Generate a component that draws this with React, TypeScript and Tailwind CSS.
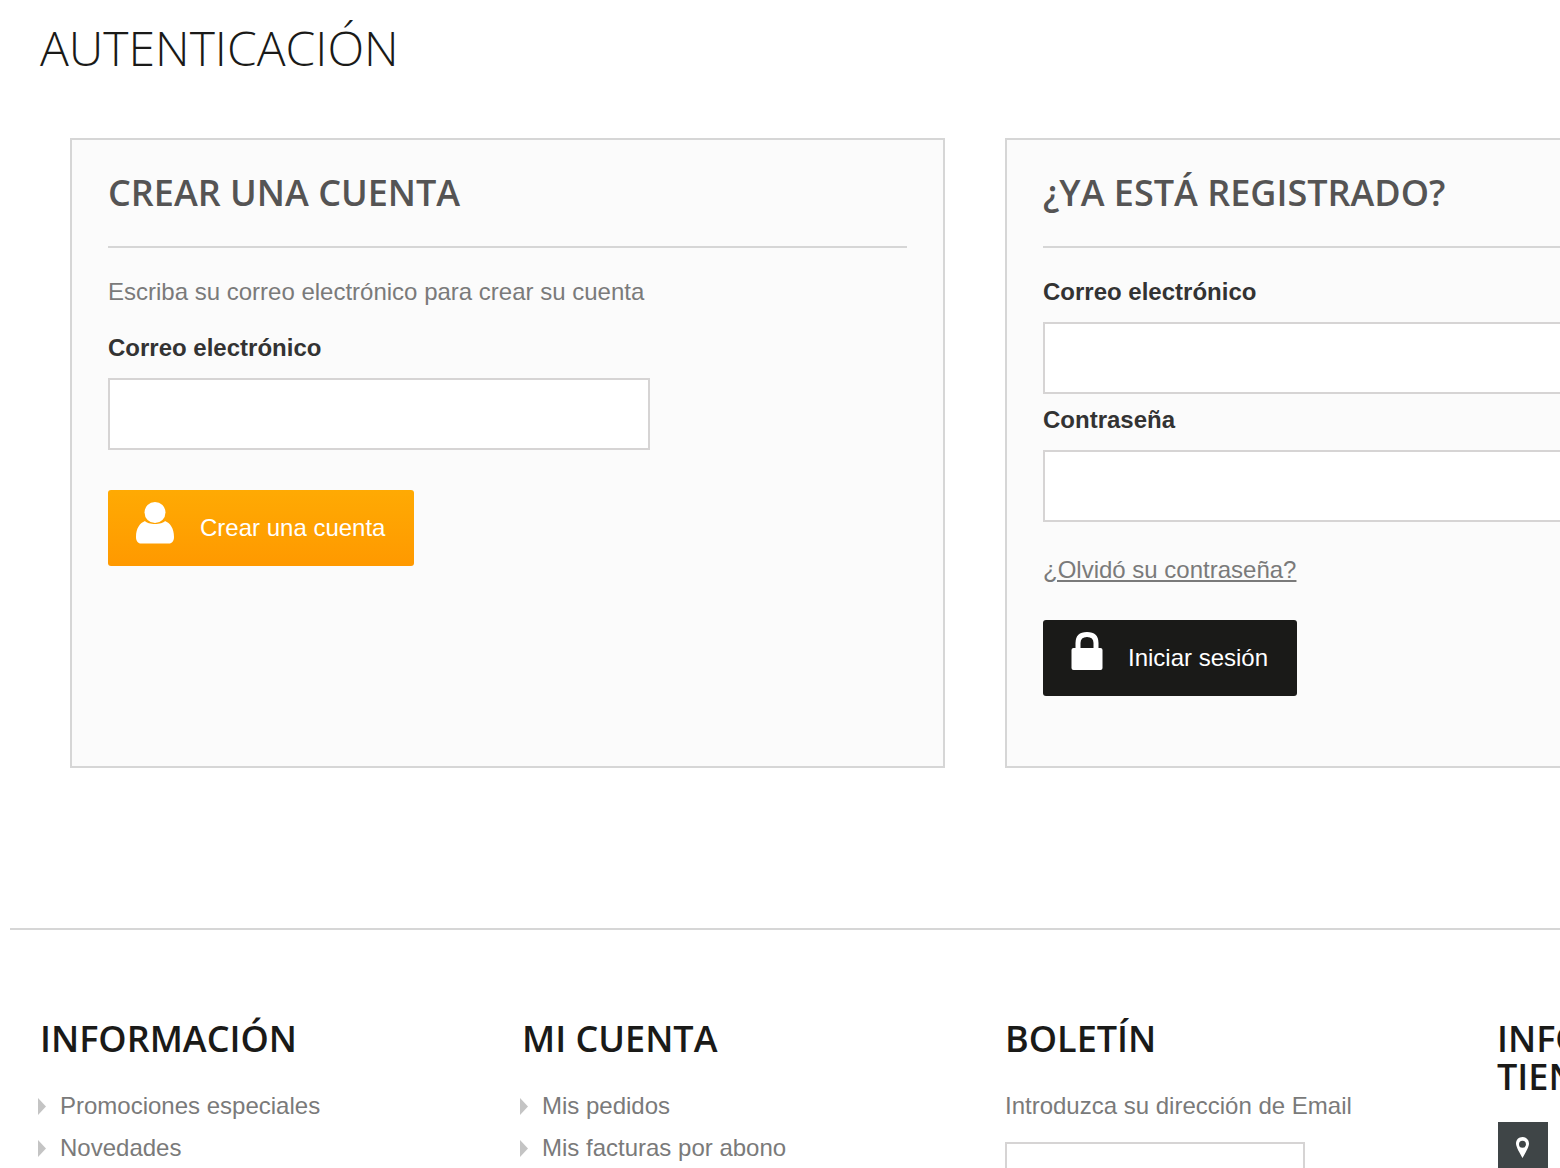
const sans = "font-['Liberation_Sans',Arial,sans-serif]";

function Arrow() {
  return (
    <svg width="8" height="17" viewBox="0 0 8 17" className="shrink-0">
      <path d="M0 0 L8 8.500 L0 17 Z" fill="#c4c4c4" />
    </svg>
  );
}

function PersonIcon() {
  return (
    <svg width="38" height="42" viewBox="0 0 38 42" className="mb-[10px] shrink-0">
      <circle cx="19" cy="10.500" r="10.500" fill="#fff" />
      <path d="M9 19 C12 23 26 23 29 19 C34 21 38 26 38 35 C38 39 36 41.500 33 41.500 L5 41.500 C2 41.500 0 39 0 35 C0 26 4 21 9 19 Z" fill="#fff" />
    </svg>
  );
}

function LockIcon() {
  return (
    <svg width="32" height="38" viewBox="0 0 32 38" className="mb-[14px] shrink-0">
      <path d="M7 17 V11 C7 5 10.500 2.500 16 2.500 C21.500 2.500 25 5 25 11 V17" fill="none" stroke="#fff" strokeWidth="5" />
      <rect x="0.500" y="16" width="31" height="22" rx="2" fill="#fff" />
    </svg>
  );
}

function PinIcon() {
  return (
    <svg width="13" height="21" viewBox="0 0 13 21">
      <path
        fillRule="evenodd"
        d="M6.500 0 C10.200 0 13 2.800 13 6.500 C13 10 9 16.500 6.500 21 C4 16.500 0 10 0 6.500 C0 2.800 2.800 0 6.500 0 Z M6.500 3.800 A3.500 3.500 0 1 0 6.500 10.800 A3.500 3.500 0 1 0 6.500 3.800 Z"
        fill="#fff"
      />
    </svg>
  );
}

function Panel({ title, children }: { title: string; children: React.ReactNode }) {
  return (
    <section className="h-[630px] w-[875px] shrink-0 border-2 border-[#d6d6d6] bg-[#fbfbfb] px-[36px]">
      <h3 className="h-[108px] border-b-2 border-[#d6d6d6] pt-[29px] font-['Open_Sans',sans-serif] text-[36px] leading-[48px] font-semibold text-[#555454]">
        {title}
      </h3>
      {children}
    </section>
  );
}

function Field({ label }: { label: string }) {
  return (
    <>
      <label className={`block pb-[4px] ${sans} text-[24px] leading-[52px] font-bold text-[#333]`}>{label}</label>
      <input className="block h-[72px] w-full border-2 border-[#d6d4d4] bg-white" />
    </>
  );
}

function FooterColumn({ title, items, className }: { title: string; items: string[]; className: string }) {
  return (
    <div className={`shrink-0 ${className}`}>
      <h4 className="font-['Open_Sans',sans-serif] text-[36px] leading-[40px] font-semibold text-[#1a1a18]">{title}</h4>
      <ul className="mt-[26px] -ml-[2px]">
        {items.map((item) => (
          <li key={item} className={`flex h-[42px] items-center gap-[14px] ${sans} text-[24px] text-[#7a7a7a]`}>
            <Arrow />
            {item}
          </li>
        ))}
      </ul>
    </div>
  );
}

export default function App() {
  return (
    <div className="h-[1168px] w-[1560px] overflow-hidden bg-white">
      <h1 className="pt-[15px] pl-[40px] font-['Open_Sans',sans-serif] text-[48px] leading-[65px] font-light text-[#1a1a18]">
        AUTENTICACIÓN
      </h1>

      {/* Account boxes */}
      <div className="mt-[58px] ml-[70px] flex w-[1810px] gap-[60px]">
        <Panel title="CREAR UNA CUENTA">
          <p className={`pt-[27px] ${sans} text-[24px] leading-[34px] text-[#7a7a7a]`}>
            Escriba su correo electrónico para crear su cuenta
          </p>
          <div className="w-[542px] pt-[13px]">
            <Field label="Correo electrónico" />
          </div>
          <button className="mt-[40px] flex h-[76px] w-[306px] items-center gap-[26px] rounded-[3px] bg-gradient-to-b from-[#ffaa03] to-[#ff9900] pl-[28px]">
            <PersonIcon />
            <span className={`${sans} text-[24px] text-white`}>Crear una cuenta</span>
          </button>
        </Panel>

        <Panel title="¿YA ESTÁ REGISTRADO?">
          <div className="pt-[18px]">
            <Field label="Correo electrónico" />
            <Field label="Contraseña" />
          </div>
          <a className={`mt-[31px] block w-fit ${sans} text-[24px] leading-[34px] text-[#7a7a7a] underline`}>¿Olvidó su contraseña?</a>
          <button className="mt-[33px] flex h-[76px] w-[254px] items-center gap-[25px] rounded-[3px] bg-[#1a1a18] pl-[28px]">
            <LockIcon />
            <span className={`${sans} text-[24px] text-white`}>Iniciar sesión</span>
          </button>
        </Panel>
      </div>

      {/* Footer */}
      <footer className="mt-[160px] ml-[10px] w-[1550px] border-t-2 border-[#d6d6d6] pt-[89px] pl-[30px]">
        <div className="flex w-[1700px]">
          <FooterColumn title="INFORMACIÓN" items={['Promociones especiales', 'Novedades']} className="w-[482px]" />
          <FooterColumn title="MI CUENTA" items={['Mis pedidos', 'Mis facturas por abono']} className="w-[483px]" />
          <div className="w-[492px] shrink-0">
            <h4 className="font-['Open_Sans',sans-serif] text-[36px] leading-[40px] font-semibold text-[#1a1a18]">BOLETÍN</h4>
            <p className={`mt-[26px] ${sans} text-[24px] leading-[42px] text-[#7a7a7a]`}>Introduzca su dirección de Email</p>
            <input className="mt-[15px] block h-[60px] w-[300px] border-2 border-[#d6d4d4] bg-white" />
          </div>
          <div className="w-[300px] shrink-0">
            <h4 className="mt-[1px] w-[230px] font-['Open_Sans',sans-serif] text-[36px] leading-[38px] font-semibold text-[#1a1a18]">INFORMACIÓN TIENDA</h4>
            <div className="mt-[26px] ml-[1px] flex h-[50px] w-[50px] items-center justify-center bg-[#3f4547] pr-[1px]">
              <PinIcon />
            </div>
          </div>
        </div>
      </footer>
    </div>
  );
}
